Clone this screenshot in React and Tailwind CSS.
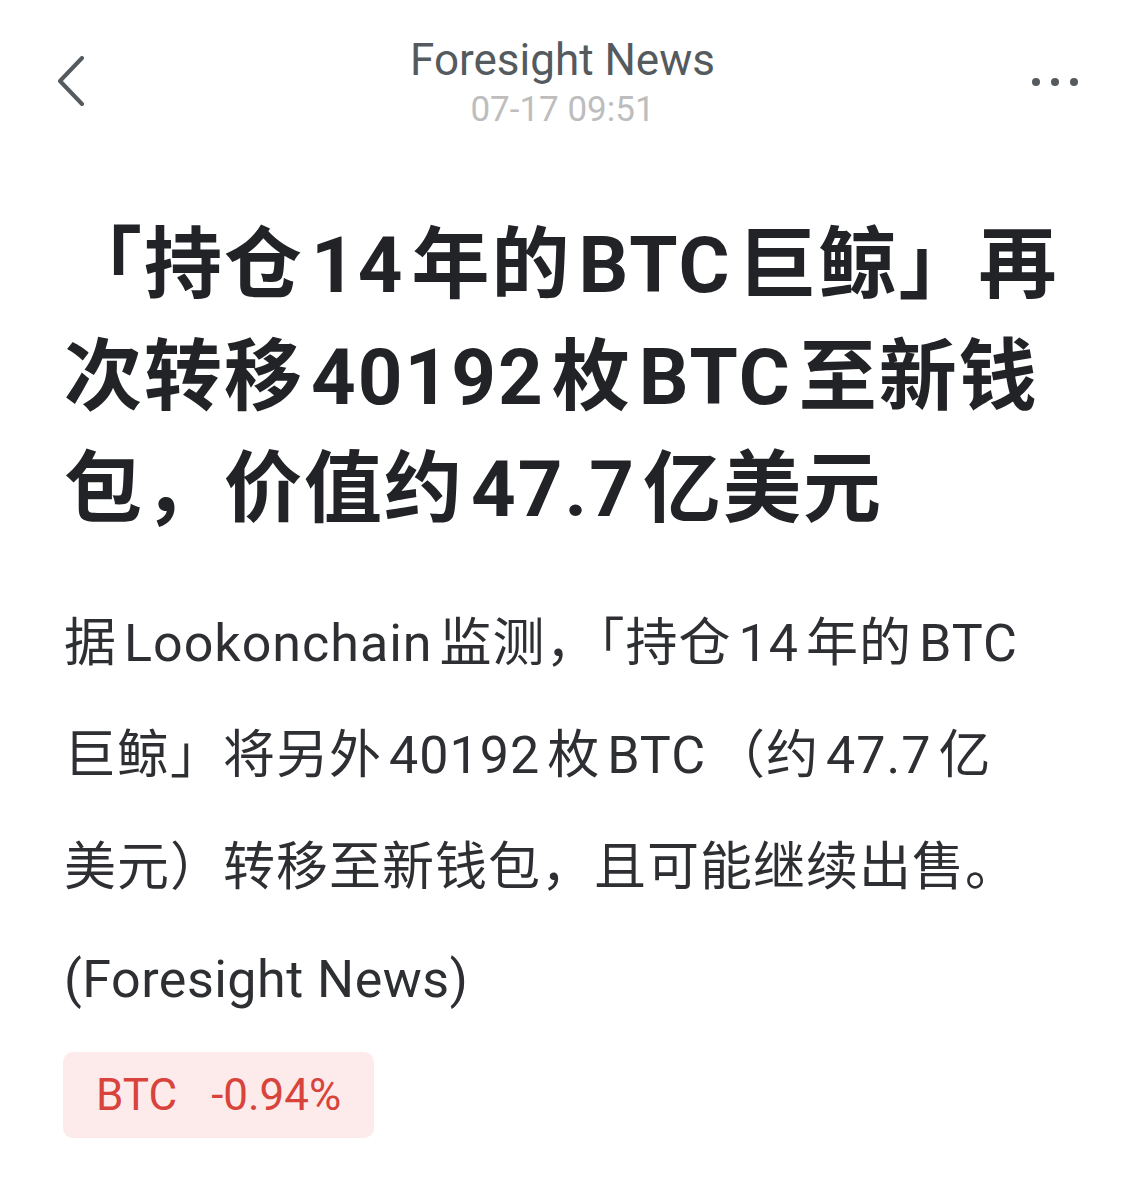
const FONT = "font-['Roboto','Noto_Sans_CJK_SC',sans-serif]"

// Android adds a little room where latin runs meet CJK glyphs
function Spaced({ text, gap }) {
  const parts = text.split(/([A-Za-z0-9.%]+)/).filter(Boolean)
  return parts.map((p, i) =>
    /^[A-Za-z0-9.%]+$/.test(p) ? (
      <span key={i} className={gap}>{p}</span>
    ) : (
      <span key={i}>{p}</span>
    )
  )
}

function BackIcon() {
  return (
    <svg width="30" height="50" viewBox="0 0 30 50" fill="none">
      <path d="M26 2 L4 25 L26 48" stroke="#555a5e" strokeWidth="4" strokeLinecap="round" strokeLinejoin="round" />
    </svg>
  )
}

function MoreIcon() {
  return (
    <svg width="48" height="10" viewBox="0 0 48 10">
      <circle cx="5" cy="5" r="4" fill="#555a5e" />
      <circle cx="24" cy="5" r="4" fill="#555a5e" />
      <circle cx="43" cy="5" r="4" fill="#555a5e" />
    </svg>
  )
}

export default function App() {
  const title = ['「持仓14年的BTC巨鲸」再', '次转移40192枚BTC至新钱', '包，价值约47.7亿美元']
  const body = [
    '据Lookonchain监测，「持仓14年的BTC',
    '巨鲸」将另外40192枚BTC（约47.7亿',
    '美元）转移至新钱包，且可能继续出售。',
  ]

  return (
    <div className={`w-[1125px] h-[1200px] bg-white ${FONT}`}>
      {/* Header */}
      <header className="relative h-[160px] flex flex-col items-center pt-[32px]">
        <div className="absolute left-[56px] top-[56px]">
          <BackIcon />
        </div>
        <div className="text-[44px] leading-[56px] text-[#555a5e]">Foresight News</div>
        <div className="text-[35px] leading-[44px] text-[#bdbdbd]">07-17 09:51</div>
        <div className="absolute right-[46px] top-[77px]">
          <MoreIcon />
        </div>
      </header>

      {/* Title */}
      <h1 className="px-[64px] pt-[50px] text-[78px] leading-[112px] font-bold text-[#222326] tracking-[2px]">
        {title.map((line) => (
          <div key={line} className="whitespace-nowrap">
            <Spaced text={line} gap="mx-[7px]" />
          </div>
        ))}
      </h1>

      {/* Body */}
      <div className="px-[64px] pt-[42px] text-[52px] leading-[112px] text-[#2e2f33] tracking-[1px]">
        {body.map((line) => (
          <div key={line} className="whitespace-nowrap">
            <Spaced text={line} gap="mx-[7px]" />
          </div>
        ))}
        <div className="whitespace-nowrap tracking-[0.5px]">(Foresight News)</div>
      </div>

      {/* Ticker badge */}
      <div className="px-[63px] pt-[16px]">
        <div className="inline-flex items-center gap-[34px] h-[86px] px-[33px] rounded-[10px] bg-[#fdeaea] text-[44px] text-[#d8433b]">
          <span>BTC</span>
          <span>-0.94%</span>
        </div>
      </div>
    </div>
  )
}
